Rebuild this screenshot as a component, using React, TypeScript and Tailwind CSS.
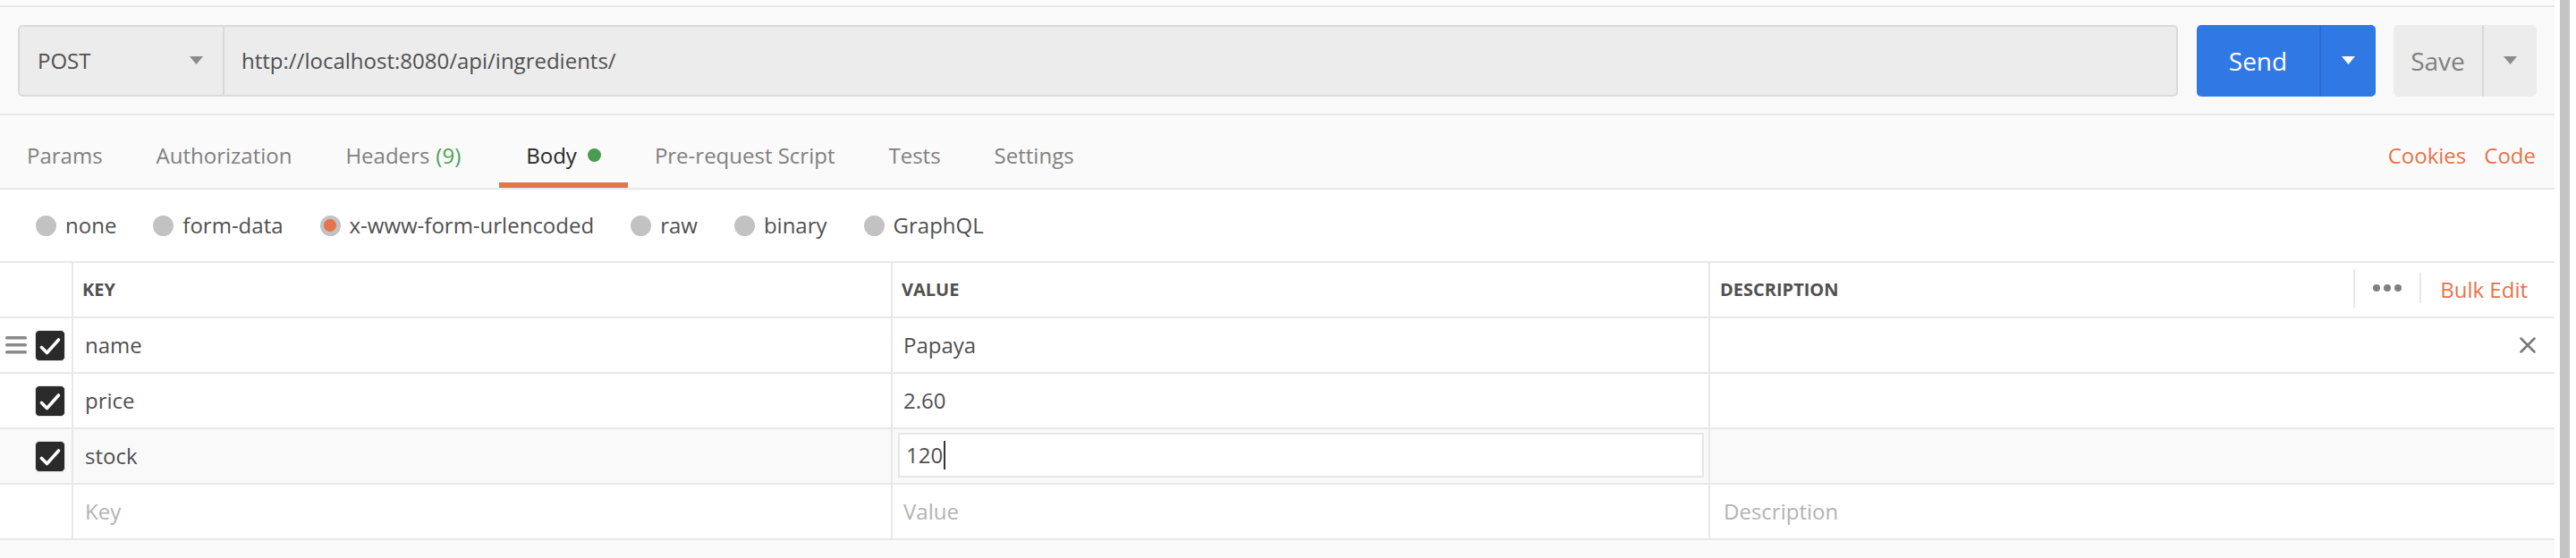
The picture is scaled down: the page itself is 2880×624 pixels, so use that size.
import React from "react";

const tabs = [
  { label: "Params" },
  { label: "Authorization" },
  { label: "Headers", count: "(9)" },
  { label: "Body", active: true, dot: true },
  { label: "Pre-request Script" },
  { label: "Tests" },
  { label: "Settings" },
];

const bodyTypes = [
  { label: "none" },
  { label: "form-data" },
  { label: "x-www-form-urlencoded", selected: true },
  { label: "raw" },
  { label: "binary" },
  { label: "GraphQL" },
];

const params = [
  { key: "name", value: "Papaya", drag: true, remove: true },
  { key: "price", value: "2.60" },
  { key: "stock", value: "120", editing: true },
];

function Caret({ color }: { color: string }) {
  return (
    <svg width="15" height="9" viewBox="0 0 15 9">
      <path d="M0 0 L15 0 L7.5 9 Z" fill={color} />
    </svg>
  );
}

function CheckBox() {
  return (
    <div className="w-[34px] h-[35px] rounded-[5px] border border-[#e6e6e6] bg-[#2a2a2a] flex items-center justify-center">
      <svg width="32" height="32" viewBox="0 0 32 32">
        <path
          d="M6.5 18.5 L12.5 24.5 L25.5 10"
          fill="none"
          stroke="#fff"
          strokeWidth="3.6"
          strokeLinecap="round"
          strokeLinejoin="round"
        />
      </svg>
    </div>
  );
}

function DragHandle() {
  return (
    <svg width="24" height="20" viewBox="0 0 24 20">
      <rect x="0" y="0" width="24" height="3.5" rx="1.5" fill="#8a8a8a" />
      <rect x="0" y="8" width="24" height="3.5" rx="1.5" fill="#8a8a8a" />
      <rect x="0" y="16" width="24" height="3.5" rx="1.5" fill="#8a8a8a" />
    </svg>
  );
}

export default function App() {
  return (
    <div className="flex w-[2880px] h-[624px] bg-white font-['Open_Sans',sans-serif] overflow-hidden">
      <div className="w-[2856px] flex flex-col bg-[#f9f9f9]">
        {/* top strip */}
        <div className="h-[6px] bg-[#fafafa] shrink-0"></div>
        <div className="h-[2px] bg-[#e8e8e8] shrink-0"></div>

        {/* request bar */}
        <div className="h-[119px] shrink-0 flex items-center pl-[20px] pr-[20px]">
          <div className="flex-1 h-[80px] flex rounded-[5px] border-2 border-[#dadada] bg-[#ececec]">
            <div className="w-[229px] shrink-0 flex items-center justify-between pl-[20px] pr-[22px] border-r-2 border-[#d9d9d9]">
              <span className="text-[24px] text-[#505050]">POST</span>
              <Caret color="#8a8a8a" />
            </div>
            <div className="flex-1 flex items-center pl-[19px] text-[24px] text-[#505050]">
              http://localhost:8080/api/ingredients/
            </div>
          </div>
          <div className="ml-[21px] w-[200px] h-[80px] flex rounded-[5px] bg-[#3079e5] text-white">
            <div className="w-[139px] flex items-center justify-center border-r-2 border-[#2a6cd2] text-[28px]">
              Send
            </div>
            <div className="flex-1 flex items-center justify-center">
              <Caret color="#ffffff" />
            </div>
          </div>
          <div className="ml-[20px] w-[160px] h-[80px] flex rounded-[5px] bg-[#ececec]">
            <div className="w-[101px] flex items-center justify-center border-r-2 border-[#d8d8d8] text-[28px] text-[#808080]">
              Save
            </div>
            <div className="flex-1 flex items-center justify-center">
              <Caret color="#8a8a8a" />
            </div>
          </div>
        </div>
        <div className="h-[2px] bg-[#e8e8e8] shrink-0"></div>

        {/* tabs */}
        <div className="h-[81px] shrink-0 flex items-stretch bg-[#fafafa]">
          {tabs.map((t) => (
            <div
              key={t.label}
              className={`flex items-center pl-[30px] pt-[14px] border-b-[6px] text-[24px] ${
                t.count ? "pr-[43px]" : "pr-[30px]"
              } ${
                t.active
                  ? "border-[#e6734a] text-[#282828]"
                  : "border-transparent text-[#808080]"
              }`}
            >
              <span>{t.label}</span>
              {t.count && <span className="ml-[7px] text-[#52a057]">{t.count}</span>}
              {t.dot && <span className="ml-[12px] w-[15px] h-[15px] rounded-full bg-[#4a9b52]"></span>}
            </div>
          ))}
          <div className="flex-1"></div>
          <div className="flex items-center gap-[20px] pr-[21px] pt-[8px] text-[24px] text-[#e6734a]">
            <span>Cookies</span>
            <span>Code</span>
          </div>
        </div>
        <div className="h-[2px] bg-[#e8e8e8] shrink-0"></div>

        {/* body type radios */}
        <div className="h-[80px] shrink-0 flex items-center gap-[41px] pl-[40px] bg-white">
          {bodyTypes.map((b) => (
            <div key={b.label} className="flex items-center gap-[10px]">
              <span className="w-[23px] h-[23px] rounded-full bg-[#c2c2c2] flex items-center justify-center">
                {b.selected && <span className="w-[14px] h-[14px] rounded-full bg-[#e6734a]"></span>}
              </span>
              <span className="text-[24px] text-[#505050]">{b.label}</span>
            </div>
          ))}
        </div>

        {/* params table */}
        <div className="shrink-0 bg-white border-t-2 border-[#e8e8e8]">
          {/* header */}
          <div className="h-[62px] flex border-b-2 border-[#e8e8e8] text-[20px] font-bold text-[#505050]">
            <div className="w-[82px] border-r-2 border-[#e8e8e8]"></div>
            <div className="w-[916px] border-r-2 border-[#e8e8e8] flex items-center pl-[10px]">KEY</div>
            <div className="w-[914px] border-r-2 border-[#e8e8e8] flex items-center pl-[10px]">VALUE</div>
            <div className="flex-1 flex items-center pl-[11px]">
              <span className="flex-1">DESCRIPTION</span>
              <div className="h-[43px] w-[2px] bg-[#e8e8e8] mt-[-4px]"></div>
              <div className="flex items-center gap-[4px] px-[20px] mt-[-5px]">
                <span className="w-[8px] h-[8px] rounded-full bg-[#808080]"></span>
                <span className="w-[8px] h-[8px] rounded-full bg-[#808080]"></span>
                <span className="w-[8px] h-[8px] rounded-full bg-[#808080]"></span>
              </div>
              <div className="h-[34px] w-[2px] bg-[#e8e8e8] mt-[-4px]"></div>
              <span className="pl-[21px] pr-[30px] text-[24px] font-normal text-[#e6734a]">Bulk Edit</span>
            </div>
          </div>

          {params.map((p) => (
            <div
              key={p.key}
              className={`h-[62px] flex border-b-2 border-[#e8e8e8] text-[24px] text-[#505050] ${
                p.editing ? "bg-[#f9f9f9]" : ""
              }`}
            >
              <div className="w-[82px] border-r-2 border-[#e8e8e8] flex items-center pl-[6px]">
                <div className="w-[24px] flex items-center">{p.drag && <DragHandle />}</div>
                <div className="ml-[9px]">
                  <CheckBox />
                </div>
              </div>
              <div className="w-[916px] border-r-2 border-[#e8e8e8] flex items-center pl-[13px]">{p.key}</div>
              <div className="w-[914px] border-r-2 border-[#e8e8e8] flex items-center">
                {p.editing ? (
                  <div className="ml-[6px] mr-[5px] mt-[-3px] flex-1 h-[50px] border-2 border-[#e6e6e6] bg-white flex items-center pl-[7px]">
                    <span>{p.value}</span>
                    <span className="ml-[1px] w-[2px] h-[32px] bg-[#333]"></span>
                  </div>
                ) : (
                  <span className="pl-[12px]">{p.value}</span>
                )}
              </div>
              <div className="flex-1 flex items-center justify-end pr-[21px]">
                {p.remove && (
                  <svg width="18" height="18" viewBox="0 0 18 18">
                    <path d="M1.5 1.5 L16.5 16.5 M16.5 1.5 L1.5 16.5" stroke="#777" strokeWidth="2.5" strokeLinecap="round" />
                  </svg>
                )}
              </div>
            </div>
          ))}

          {/* empty row */}
          <div className="h-[62px] flex border-b-2 border-[#e8e8e8] text-[24px] text-[#b3b3b3]">
            <div className="w-[82px] border-r-2 border-[#e8e8e8]"></div>
            <div className="w-[916px] border-r-2 border-[#e8e8e8] flex items-center pl-[13px]">Key</div>
            <div className="w-[914px] border-r-2 border-[#e8e8e8] flex items-center pl-[12px]">Value</div>
            <div className="flex-1 flex items-center pl-[15px]">Description</div>
          </div>
        </div>

        <div className="flex-1 bg-[#f9f9f9]"></div>
      </div>

      {/* scrollbar */}
      <div className="ml-[6px] w-[11px] h-full bg-[#c4c4c4]"></div>
    </div>
  );
}
